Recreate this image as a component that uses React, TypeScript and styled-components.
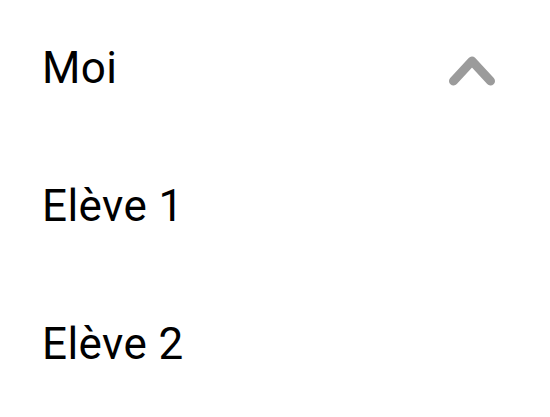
import styled, { createGlobalStyle } from "styled-components";

const GlobalStyle = createGlobalStyle`
    body {
        margin: 0;
        background: #ffffff;
        font-family: Roboto, "Noto Sans", sans-serif;
    }
`;

const List = styled.div`
    display: flex;
    flex-direction: column;
    width: 550px;
`;

const Row = styled.div`
    display: flex;
    align-items: center;
    justify-content: space-between;
    height: 138px;
    padding: 0 54px 0 42px;
    box-sizing: border-box;
`;

const Label = styled.span`
    font-size: 44px;
    letter-spacing: 0.4px;
    color: #000000;
    margin-bottom: 3px;
`;

const Chevron = styled.svg`
    width: 48px;
    height: 34px;
    margin-top: 4px;
`;

const students = ["Elève 1", "Elève 2"];

const App = () => {
    return (
        <>
            <GlobalStyle />
            <List>
                <Row>
                    <Label>Moi</Label>
                    <Chevron viewBox="0 0 48 34">
                        <polyline
                            points="5.5,27 24,7 42.5,27"
                            fill="none"
                            stroke="#9b9b9b"
                            strokeWidth={9}
                            strokeLinecap="round"
                            strokeLinejoin="round"
                        />
                    </Chevron>
                </Row>
                {students.map((name) => (
                    <Row key={name}>
                        <Label>{name}</Label>
                    </Row>
                ))}
            </List>
        </>
    );
};

export default App;
